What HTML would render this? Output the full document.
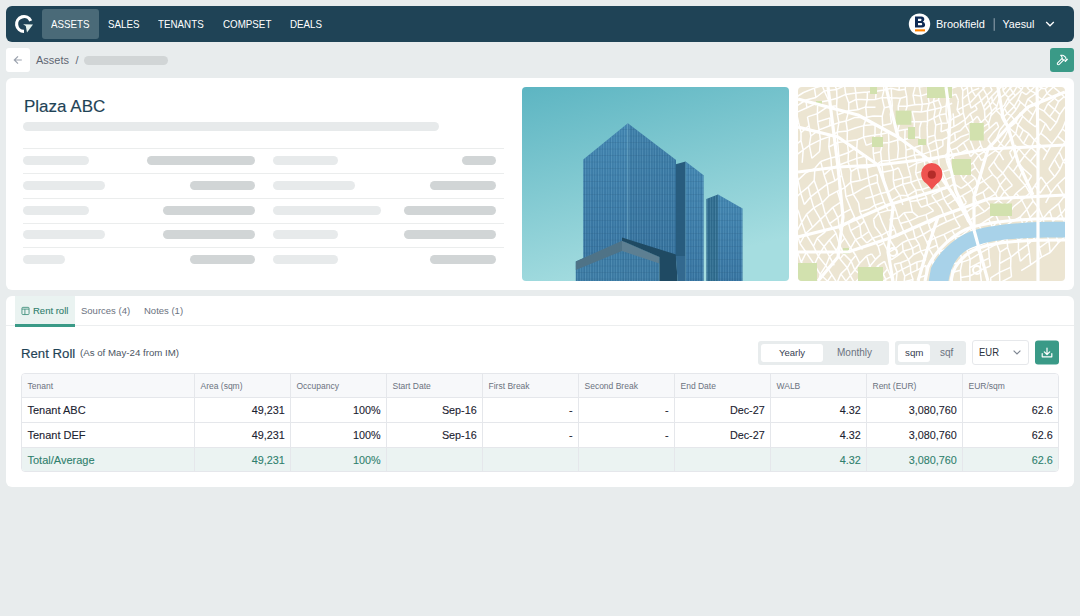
<!DOCTYPE html><html><head><meta charset="utf-8"><style>
*{box-sizing:border-box;margin:0;padding:0}
html,body{width:1080px;height:616px;overflow:hidden;background:#e8eced;font-family:"Liberation Sans",sans-serif;color:#1b2430}
.a{position:absolute;white-space:nowrap}
.navi{position:absolute;top:9.5px;height:30px;line-height:30px;font-size:10.3px;transform:scaleX(0.95);transform-origin:0 0;color:#fff}
.pill{position:absolute;height:9px;border-radius:4.5px;background:#e7eaeb}
.pill.d{background:#d1d5d6}
.card{position:absolute;background:#fff;border-radius:6px}
.hr{position:absolute;height:1px;background:#ebeded}
.th{position:absolute;font-size:8.5px;color:#6b7280}
.td{position:absolute;font-size:10.8px;color:#1b2230;-webkit-text-stroke:0.1px #1b2230}
.tg{position:absolute;font-size:10.8px;color:#2f7f6d;-webkit-text-stroke:0.1px #2f7f6d}
</style></head><body>
<div class="a" style="left:6px;top:6px;width:1068px;height:36px;background:#1f4356;border-radius:6px"></div>
<div class="a" style="left:42px;top:9px;width:57px;height:30px;background:#4a6a78;border-radius:3px"></div>
<div class="navi" style="left:51px">ASSETS</div>
<div class="navi" style="left:108px">SALES</div>
<div class="navi" style="left:158px">TENANTS</div>
<div class="navi" style="left:223px">COMPSET</div>
<div class="navi" style="left:290px">DEALS</div>
<svg class="a" style="left:0;top:0" width="1080" height="100" viewBox="0 0 1080 100"><path d="M30.73,20.93 A7.4,7.4 0 1 0 24,31.4" fill="none" stroke="#fff" stroke-width="3.2"/><path d="M23.1,24.2 L33,24.4 L27,32.6 L25.8,26 Z" fill="#e6f3ef"/><circle cx="919.5" cy="24.1" r="10.7" fill="#fff"/><path fill="#0f2b55" fill-rule="evenodd" d="M915,16.4 H921.3 Q924.3,16.4 924.3,19.3 Q924.3,21.1 922.8,21.8 Q925.1,22.5 925.1,24.8 Q925.1,27.5 922,27.5 H915 Z M918,18.8 H920.8 Q921.5,18.8 921.5,19.8 Q921.5,20.9 920.8,20.9 H918 Z M918,23.1 H921.3 Q922.2,23.1 922.2,24.2 Q922.2,25.3 921.3,25.3 H918 Z"/><rect x="915" y="29.3" width="10" height="2.1" fill="#ff8200"/><rect x="993.6" y="18.2" width="1.3" height="12.6" fill="#7a909d"/><path d="M1046.2,22 L1050,25.8 L1053.8,22" fill="none" stroke="#fff" stroke-width="1.3"/><rect x="6" y="48" width="24" height="24" rx="3" fill="#fff"/><path d="M18,56.3 L14.3,60 L18,63.7 M14.3,60 H21.8" fill="none" stroke="#9ba2ae" stroke-width="1.2"/><rect x="1050" y="48" width="24" height="24" rx="3" fill="#3a9a87"/><g transform="translate(1055.8,53.6) scale(0.53)" fill="none" stroke="#fff" stroke-width="2" stroke-linecap="round" stroke-linejoin="round"><path d="m15 12-8.5 8.5c-.83.83-2.17.83-3 0a2.12 2.12 0 0 1 0-3L12 9"/><path d="M17.64 15 22 10.64"/><path d="m20.91 11.7-1.25-1.25c-.6-.6-.93-1.4-.93-2.25v-.86L16.01 4.6a5.56 5.56 0 0 0-3.94-1.64H9l.92.82A6.180 6.18 0 0 1 12 8.4v1.560l2 2h2.47l2.26 1.91"/></g></svg>
<div class="a" style="left:936px;top:18px;font-size:11px;color:#fff">Brookfield</div>
<div class="a" style="left:1002.5px;top:18px;font-size:10.7px;color:#fff">Yaesul</div>
<div class="a" style="left:36px;top:54px;font-size:11px;color:#5f6672">Assets</div>
<div class="a" style="left:75.5px;top:54px;font-size:11px;color:#5f6672">/</div>
<div class="pill d" style="left:84px;top:56px;width:84px"></div>
<div class="card" style="left:6px;top:78px;width:1068px;height:212px"></div>
<div class="a" style="left:24px;top:97px;font-size:17px;color:#1f4356;-webkit-text-stroke:0.15px #1f4356">Plaza ABC</div>
<div class="pill" style="left:23px;top:122px;width:416px"></div>
<div class="hr" style="left:23px;top:148px;width:481px"></div>
<div class="hr" style="left:23px;top:173px;width:481px"></div>
<div class="hr" style="left:23px;top:198px;width:481px"></div>
<div class="hr" style="left:23px;top:223px;width:481px"></div>
<div class="hr" style="left:23px;top:247px;width:481px"></div>
<div class="pill" style="left:23px;top:156px;width:65.6px"></div>
<div class="pill d" style="left:147px;top:156px;width:108px"></div>
<div class="pill" style="left:273px;top:156px;width:65px"></div>
<div class="pill d" style="left:462px;top:156px;width:34px"></div>
<div class="pill" style="left:23px;top:181px;width:82px"></div>
<div class="pill d" style="left:190px;top:181px;width:65px"></div>
<div class="pill" style="left:273px;top:181px;width:82px"></div>
<div class="pill d" style="left:430px;top:181px;width:66px"></div>
<div class="pill" style="left:23px;top:205.5px;width:65.6px"></div>
<div class="pill d" style="left:163px;top:205.5px;width:92px"></div>
<div class="pill" style="left:273px;top:205.5px;width:108px"></div>
<div class="pill d" style="left:403.5px;top:205.5px;width:92.5px"></div>
<div class="pill" style="left:23px;top:230px;width:82px"></div>
<div class="pill d" style="left:163px;top:230px;width:92px"></div>
<div class="pill" style="left:273px;top:230px;width:65px"></div>
<div class="pill d" style="left:403.5px;top:230px;width:92.5px"></div>
<div class="pill" style="left:23px;top:255px;width:41.5px"></div>
<div class="pill d" style="left:190px;top:255px;width:65px"></div>
<div class="pill" style="left:273px;top:255px;width:65px"></div>
<div class="pill d" style="left:430px;top:255px;width:66px"></div>
<svg class="a" style="left:522px;top:87px" width="267" height="194" viewBox="522 87 267 194"><defs><clipPath id="pc"><rect x="522" y="87" width="267" height="194" rx="4"/></clipPath><linearGradient id="sky" x1="0" y1="0" x2="0.35" y2="1"><stop offset="0" stop-color="#5db5c2"/><stop offset="1" stop-color="#a5dde0"/></linearGradient><linearGradient id="bd" x1="0" y1="0" x2="0" y2="1"><stop offset="0" stop-color="#4286b2"/><stop offset="1" stop-color="#3572a0"/></linearGradient><pattern id="vl" width="2.6" height="6.5" patternUnits="userSpaceOnUse"><rect x="0" width="0.9" height="6.5" fill="#7fb8d6" opacity="0.3"/><rect x="1.6" width="0.6" height="6.5" fill="#24577a" opacity="0.25"/><rect y="5.9" width="2.6" height="0.6" fill="#24577a" opacity="0.3"/></pattern></defs><g clip-path="url(#pc)"><rect x="522" y="87" width="267" height="194" fill="url(#sky)"/><polygon points="583.3,159.4 627.8,123.3 627.8,240 583.3,259" fill="url(#bd)" /><polygon points="583.3,159.4 627.8,123.3 627.8,240 583.3,259" fill="url(#vl)" /><polygon points="627.8,123.3 676,160 676,256 627.8,240" fill="url(#bd)" /><polygon points="627.8,123.3 676,160 676,256 627.8,240" fill="#2f6890" opacity="0.25"/><polygon points="627.8,123.3 676,160 676,256 627.8,240" fill="url(#vl)" /><line x1="627.8" y1="123.3" x2="627.8" y2="240" stroke="#8cc0da" stroke-width="0.7" opacity="0.6"/><polygon points="575.8,261.5 622,240.7 622,281 575.8,281" fill="#3b7aa4" /><polygon points="575.8,261.5 622,240.7 622,281 575.8,281" fill="url(#vl)" /><polygon points="622,240.7 659.4,257 659.4,281 622,281" fill="#3a78a2" /><polygon points="622,240.7 659.4,257 659.4,281 622,281" fill="url(#vl)" /><polygon points="575.8,261.5 622,240.7 622,251 575.8,270" fill="#4f7387" /><polygon points="622,240.7 659.4,257 659.4,263.5 622,251" fill="#5d7f92" /><polygon points="622,237.5 676,254.5 677.6,281 659.4,281 659.4,257 622,240.7" fill="#1f4a63" /><polygon points="675.8,164.2 685.6,161.4 685.6,256 675.8,256" fill="#285c7e" /><polygon points="685.6,161.4 703.6,175.3 703.6,281 685.6,281" fill="url(#bd)" /><polygon points="685.6,161.4 703.6,175.3 703.6,281 685.6,281" fill="url(#vl)" /><polygon points="675.8,256 685.6,256 685.6,281 677.6,281" fill="#33698f" /><polygon points="706.4,198.9 718,194.5 718,281 706.4,281" fill="#2d6a8c" /><polygon points="706.4,198.9 718,194.5 718,281 706.4,281" fill="url(#vl)" /><polygon points="718,194.5 742.5,208.6 742.5,281 718,281" fill="url(#bd)" /><polygon points="718,194.5 742.5,208.6 742.5,281 718,281" fill="url(#vl)" /></g></svg>
<svg class="a" style="left:798px;top:87px" width="267" height="194" viewBox="0 0 267 194"><defs><clipPath id="mc"><rect width="267" height="194" rx="4"/></clipPath></defs><g clip-path="url(#mc)"><rect width="267" height="194" fill="#ece5d2"/><path d="M-45.3,41.1L-34.6,31.0M-45.3,41.1L-41.6,47.9M-41.6,47.9L-32.3,40.0M-41.6,47.9L-38.9,55.1M-38.9,55.1L-32.1,47.1M-38.9,55.1L-38.7,61.9M-38.7,61.9L-33.3,71.7M-33.3,71.7L-27.7,62.3M-33.3,71.7L-30.9,80.1M-30.9,80.1L-29.6,91.4M-29.6,91.4L-26.2,103.9M-26.2,103.9L-17.5,97.4M-26.2,103.9L-24.3,114.6M-24.3,114.6L-16.2,107.3M-24.3,114.6L-19.2,128.9M-19.2,128.9L-11.8,120.6M-12.7,138.6L-7.1,150.5M-7.1,150.5L-1.4,144.7M-7.1,150.5L-1.5,161.9M-1.5,161.9L3.2,175.3M3.2,175.3L8.2,165.5M3.2,175.3L10.8,183.5M10.8,183.5L16.4,177.6M20.4,195.2L22.2,187.3M20.4,195.2L25.2,204.3M25.2,204.3L29.6,194.2M32.8,211.5L35.3,202.0M38.1,219.7L40.7,209.4M38.1,219.7L45.4,226.5M45.4,226.5L48.1,218.9M45.4,226.5L51.0,230.6M51.0,230.6L51.3,222.3M51.0,230.6L53.5,235.9M53.5,235.9L57.9,229.7M53.5,235.9L56.1,241.0M56.1,241.0L59.2,234.4M56.1,241.0L58.9,247.8M58.9,247.8L62.1,241.5M58.9,247.8L59.3,253.0M59.3,253.0L63.0,245.3M59.3,253.0L60.8,256.6M60.8,256.6L62.2,251.9M62.1,261.8L59.4,266.5M59.4,266.5L63.3,259.1M59.2,269.8L61.4,266.6M-32.3,40.0L-24.7,31.5M-32.3,40.0L-32.1,47.1M-32.1,47.1L-22.2,40.2M-32.1,47.1L-28.7,54.8M-28.7,54.8L-19.7,47.3M-27.7,62.3L-15.6,57.8M-24.9,75.3L-13.8,66.6M-24.9,75.3L-22.5,85.4M-22.5,85.4L-13.4,78.2M-22.5,85.4L-17.5,97.4M-17.5,97.4L-16.2,107.3M-16.2,107.3L-8.6,99.2M-11.8,120.6L-5.3,113.7M-11.8,120.6L-8.7,132.5M-8.7,132.5L-1.4,144.7M-1.4,144.7L3.7,135.3M-1.4,144.7L1.9,156.4M1.9,156.4L7.6,146.5M1.9,156.4L8.2,165.5M8.2,165.5L16.4,177.6M16.4,177.6L20.3,169.3M16.4,177.6L22.2,187.3M22.2,187.3L27.9,178.7M22.2,187.3L29.6,194.2M29.6,194.2L33.9,187.9M29.6,194.2L35.3,202.0M35.3,202.0L39.0,195.9M35.3,202.0L40.7,209.4M40.7,209.4L48.1,218.9M48.1,218.9L51.5,210.5M48.1,218.9L51.3,222.3M51.3,222.3L54.6,217.8M57.9,229.7L59.2,234.4M59.2,234.4L60.6,228.4M62.1,241.5L63.0,245.3M63.0,245.3L65.5,240.0M63.0,245.3L62.2,251.9M62.2,251.9L66.5,245.1M62.2,251.9L61.8,255.4M61.8,255.4L65.2,249.7M61.8,255.4L63.3,259.1M63.3,259.1L65.4,255.4M63.3,259.1L61.4,266.6M61.4,266.6L62.6,260.5M-24.7,31.5L-11.9,26.5M-24.7,31.5L-22.2,40.2M-22.2,40.2L-11.2,32.7M-22.2,40.2L-19.7,47.3M-19.7,47.3L-15.6,57.8M-15.6,57.8L-6.5,50.1M-15.6,57.8L-13.8,66.6M-13.8,66.6L-5.8,60.8M-13.8,66.6L-13.4,78.2M-13.4,78.2L-4.1,69.7M-13.4,78.2L-11.1,88.0M-11.1,88.0L-2.0,82.1M-8.6,99.2L-0.0,93.1M-8.6,99.2L-5.3,113.7M-5.3,113.7L2.7,106.0M-5.3,113.7L0.5,124.5M0.5,124.5L3.7,135.3M3.7,135.3L8.5,127.4M3.7,135.3L7.6,146.5M7.6,146.5L14.6,140.2M7.6,146.5L15.5,159.3M15.5,159.3L19.1,151.2M15.5,159.3L20.3,169.3M20.3,169.3L26.1,159.4M20.3,169.3L27.9,178.7M27.9,178.7L31.5,169.7M27.9,178.7L33.9,187.9M33.9,187.9L39.0,195.9M39.0,195.9L42.8,186.9M39.0,195.9L44.6,202.8M44.6,202.8L48.0,194.1M44.6,202.8L51.5,210.5M51.5,210.5L53.9,202.3M51.5,210.5L54.6,217.8M54.6,217.8L58.8,209.7M59.6,222.7L61.4,216.9M59.6,222.7L60.6,228.4M60.6,228.4L63.5,221.3M63.5,234.3L66.5,226.9M63.5,234.3L65.5,240.0M65.5,240.0L67.2,233.8M65.5,240.0L66.5,245.1M66.5,245.1L68.4,236.6M65.2,249.7L68.8,242.1M62.6,260.5L66.0,255.4M-14.9,19.0L-4.7,12.0M-14.9,19.0L-11.9,26.5M-11.9,26.5L-2.2,19.5M-11.2,32.7L-1.7,25.5M-10.6,42.0L0.5,35.2M-10.6,42.0L-6.5,50.1M-6.5,50.1L-5.8,60.8M-5.8,60.8L3.0,53.6M-4.1,69.7L5.2,63.0M-4.1,69.7L-2.0,82.1M-2.0,82.1L-0.0,93.1M-0.0,93.1L7.8,85.8M-0.0,93.1L2.7,106.0M2.7,106.0L10.3,99.8M2.7,106.0L6.3,117.5M6.3,117.5L12.6,109.9M8.5,127.4L15.8,120.9M8.5,127.4L14.6,140.2M14.6,140.2L22.5,132.4M19.1,151.2L27.3,144.9M19.1,151.2L26.1,159.4M26.1,159.4L31.4,153.0M26.1,159.4L31.5,169.7M31.5,169.7L38.2,163.5M31.5,169.7L36.2,178.4M42.8,186.9L49.3,180.8M42.8,186.9L48.0,194.1M48.0,194.1L52.3,188.6M48.0,194.1L53.9,202.3M53.9,202.3L56.6,196.3M53.9,202.3L58.8,209.7M58.8,209.7L61.9,202.0M61.4,216.9L66.6,210.2M63.5,221.3L66.5,226.9M66.5,226.9L69.8,222.5M66.5,226.9L67.2,233.8M67.2,233.8L72.5,226.0M67.2,233.8L68.4,236.6M68.4,236.6L71.2,231.2M68.4,236.6L68.8,242.1M68.8,242.1L73.1,237.2M68.8,242.1L67.5,248.1M67.5,248.1L70.8,243.2M67.5,248.1L66.0,255.4M66.0,255.4L69.2,249.1M-4.7,12.0L5.5,5.5M-4.7,12.0L-2.2,19.5M-2.2,19.5L7.9,13.0M-2.2,19.5L-1.7,25.5M-1.7,25.5L8.9,20.8M-1.7,25.5L0.5,35.2M0.5,35.2L3.0,45.7M3.0,45.7L11.0,38.5M3.0,45.7L3.0,53.6M3.0,53.6L5.2,63.0M5.2,63.0L11.4,58.3M5.2,63.0L4.2,75.8M7.8,85.8L16.9,81.3M10.3,99.8L16.2,93.4M10.3,99.8L12.6,109.9M12.6,109.9L20.1,104.2M12.6,109.9L15.8,120.9M15.8,120.9L24.3,115.7M15.8,120.9L22.5,132.4M22.5,132.4L27.5,127.7M22.5,132.4L27.3,144.9M31.4,153.0L38.0,146.2M31.4,153.0L38.2,163.5M38.2,163.5L41.4,157.9M38.2,163.5L42.0,171.9M42.0,171.9L45.9,166.9M42.0,171.9L49.3,180.8M49.3,180.8L53.1,174.1M49.3,180.8L52.3,188.6M52.3,188.6L56.8,183.0M52.3,188.6L56.6,196.3M56.6,196.3L63.4,188.4M56.6,196.3L61.9,202.0M61.9,202.0L66.1,196.6M61.9,202.0L66.6,210.2M66.6,210.2L69.6,202.4M66.9,215.3L71.2,209.5M69.8,222.5L75.2,213.9M69.8,222.5L72.5,226.0M72.5,226.0L74.4,222.2M72.5,226.0L71.2,231.2M71.2,231.2L76.5,227.5M71.2,231.2L73.1,237.2M73.1,237.2L73.5,233.4M73.1,237.2L70.8,243.2M70.8,243.2L75.4,239.9M69.2,249.1L72.8,242.5M5.5,5.5L16.4,1.1M7.9,13.0L17.9,10.5M7.9,13.0L8.9,20.8M8.9,20.8L19.7,15.6M9.5,29.9L19.4,26.6M9.5,29.9L11.0,38.5M11.0,38.5L12.8,49.0M12.8,49.0L21.1,42.9M12.8,49.0L11.4,58.3M11.4,58.3L22.4,52.8M11.4,58.3L13.9,71.3M13.9,71.3L21.6,64.5M16.9,81.3L22.7,74.5M16.9,81.3L16.2,93.4M16.2,93.4L20.1,104.2M20.1,104.2L29.2,97.2M20.1,104.2L24.3,115.7M24.3,115.7L30.7,108.9M24.3,115.7L27.5,127.7M27.5,127.7L34.8,120.4M27.5,127.7L31.6,136.7M31.6,136.7L39.9,130.6M31.6,136.7L38.0,146.2M38.0,146.2L41.4,157.9M41.4,157.9L46.7,151.1M41.4,157.9L45.9,166.9M45.9,166.9L52.7,161.0M45.9,166.9L53.1,174.1M53.1,174.1L57.8,168.5M53.1,174.1L56.8,183.0M56.8,183.0L61.6,176.2M56.8,183.0L63.4,188.4M63.4,188.4L66.0,184.3M63.4,188.4L66.1,196.6M66.1,196.6L70.7,189.4M66.1,196.6L69.6,202.4M69.6,202.4L73.1,196.9M69.6,202.4L71.2,209.5M71.2,209.5L77.3,202.7M71.2,209.5L75.2,213.9M75.2,213.9L79.0,210.4M75.2,213.9L74.4,222.2M74.4,222.2L78.0,216.5M73.5,233.4L75.4,239.9M75.4,239.9L79.0,233.7M75.4,239.9L72.8,242.5M72.8,242.5L75.5,240.6M16.4,1.1L24.3,-1.3M16.4,1.1L17.9,10.5M17.9,10.5L26.3,4.0M19.7,15.6L30.6,13.5M19.7,15.6L19.4,26.6M19.4,26.6L29.1,20.1M19.4,26.6L19.7,34.7M19.7,34.7L32.0,30.9M19.7,34.7L21.1,42.9M21.1,42.9L31.8,38.8M21.1,42.9L22.4,52.8M22.4,52.8L31.5,49.6M22.4,52.8L21.6,64.5M22.7,74.5L32.9,70.9M22.7,74.5L26.0,87.9M26.0,87.9L33.6,81.2M26.0,87.9L29.2,97.2M29.2,97.2L36.9,93.9M29.2,97.2L30.7,108.9M30.7,108.9L39.4,104.2M34.8,120.4L42.7,115.2M34.8,120.4L39.9,130.6M39.9,130.6L45.6,125.8M39.9,130.6L41.5,141.8M41.5,141.8L50.2,135.2M41.5,141.8L46.7,151.1M46.7,151.1L52.7,161.0M52.7,161.0L57.6,152.6M52.7,161.0L57.8,168.5M57.8,168.5L61.6,176.2M61.6,176.2L68.6,168.9M66.0,184.3L71.8,179.2M66.0,184.3L70.7,189.4M70.7,189.4L76.0,184.9M70.7,189.4L73.1,196.9M73.1,196.9L78.7,190.7M77.3,202.7L80.1,197.5M77.3,202.7L79.0,210.4M79.0,210.4L82.6,204.6M79.0,210.4L78.0,216.5M78.0,216.5L85.1,210.1M78.0,216.5L78.3,220.8M78.3,220.8L83.3,216.7M78.3,220.8L79.3,227.1M79.3,227.1L82.4,222.9M79.0,233.7L81.4,229.6M79.0,233.7L75.5,240.6M75.5,240.6L78.9,237.1M24.3,-1.3L35.7,-4.0M24.3,-1.3L26.3,4.0M26.3,4.0L38.6,2.4M26.3,4.0L30.6,13.5M30.6,13.5L39.0,11.2M29.1,20.1L38.6,18.7M32.0,30.9L31.8,38.8M31.8,38.8L40.9,35.6M31.5,49.6L39.3,45.1M31.5,49.6L30.8,60.0M30.8,60.0L39.7,55.5M30.8,60.0L32.9,70.9M32.9,70.9L40.9,69.0M32.9,70.9L33.6,81.2M33.6,81.2L41.8,77.7M33.6,81.2L36.9,93.9M36.9,93.9L43.8,88.4M39.4,104.2L46.9,100.6M39.4,104.2L42.7,115.2M42.7,115.2L45.6,125.8M45.6,125.8L52.9,122.1M50.2,135.2L56.6,130.4M50.2,135.2L52.6,143.6M52.6,143.6L61.9,138.4M52.6,143.6L57.6,152.6M57.6,152.6L63.3,149.8M57.6,152.6L64.5,162.5M68.6,168.9L73.6,166.9M68.6,168.9L71.8,179.2M71.8,179.2L77.5,172.4M71.8,179.2L76.0,184.9M76.0,184.9L79.7,178.8M76.0,184.9L78.7,190.7M78.7,190.7L85.3,187.1M78.7,190.7L80.1,197.5M80.1,197.5L87.8,192.4M82.6,204.6L87.3,199.0M82.6,204.6L85.1,210.1M85.1,210.1L83.3,216.7M83.3,216.7L88.3,213.0M83.3,216.7L82.4,222.9M81.4,229.6L85.6,227.4M81.4,229.6L78.9,237.1M78.9,237.1L84.2,232.2M35.7,-4.0L45.9,-8.0M35.7,-4.0L38.6,2.4M38.6,2.4L46.6,-1.3M38.6,2.4L39.0,11.2M39.0,11.2L47.7,7.4M39.0,11.2L38.6,18.7M38.6,18.7L39.4,27.7M39.4,27.7L50.7,23.7M39.4,27.7L40.9,35.6M40.9,35.6L48.0,34.1M40.9,35.6L39.3,45.1M39.3,45.1L49.4,43.9M39.3,45.1L39.7,55.5M39.7,55.5L49.1,54.2M39.7,55.5L40.9,69.0M40.9,69.0L50.5,65.5M40.9,69.0L41.8,77.7M41.8,77.7L50.0,74.6M41.8,77.7L43.8,88.4M43.8,88.4L46.9,100.6M46.9,100.6L52.7,95.3M46.9,100.6L47.9,109.6M47.9,109.6L55.2,107.2M47.9,109.6L52.9,122.1M52.9,122.1L56.6,130.4M56.6,130.4L61.9,138.4M61.9,138.4L66.3,134.1M61.9,138.4L63.3,149.8M63.3,149.8L71.0,144.5M63.3,149.8L68.9,155.9M68.9,155.9L74.7,151.3M73.6,166.9L77.5,172.4M77.5,172.4L82.5,167.6M79.7,178.8L86.5,174.3M79.7,178.8L85.3,187.1M85.3,187.1L89.5,182.1M85.3,187.1L87.8,192.4M87.8,192.4L92.9,189.7M87.8,192.4L87.3,199.0M87.3,199.0L94.9,196.8M87.3,199.0L88.6,205.5M88.6,205.5L95.3,203.2M88.6,205.5L88.3,213.0M88.3,213.0L94.3,210.5M87.8,218.2L85.6,227.4M85.6,227.4L93.2,223.2M85.6,227.4L84.2,232.2M84.2,232.2L89.8,230.1M45.9,-8.0L55.7,-11.3M45.9,-8.0L46.6,-1.3M46.6,-1.3L47.7,7.4M47.7,7.4L57.8,5.9M47.7,7.4L50.8,16.0M50.8,16.0L58.2,12.3M50.8,16.0L50.7,23.7M50.7,23.7L59.7,22.7M50.7,23.7L48.0,34.1M48.0,34.1L57.1,30.4M48.0,34.1L49.4,43.9M49.4,43.9L57.2,41.0M49.4,43.9L49.1,54.2M49.1,54.2L59.4,52.8M49.1,54.2L50.5,65.5M50.5,65.5L58.8,60.7M50.5,65.5L50.0,74.6M50.0,74.6L58.8,71.4M50.0,74.6L53.0,84.5M53.0,84.5L59.6,80.7M53.0,84.5L52.7,95.3M52.7,95.3L62.2,93.6M52.7,95.3L55.2,107.2M55.2,107.2L64.9,101.4M55.2,107.2L60.6,115.8M60.6,115.8L62.0,124.8M62.0,124.8L71.1,122.0M62.0,124.8L66.3,134.1M66.3,134.1L71.0,144.5M71.0,144.5L74.7,151.3M74.7,151.3L83.4,148.3M74.7,151.3L80.2,159.2M80.2,159.2L85.8,156.2M80.2,159.2L82.5,167.6M86.5,174.3L89.5,182.1M89.5,182.1L92.9,189.7M92.9,189.7L99.1,185.3M92.9,189.7L94.9,196.8M94.9,196.8L95.3,203.2M95.3,203.2L99.0,199.6M94.3,210.5L100.4,207.4M94.3,210.5L94.4,217.5M94.4,217.5L93.2,223.2M93.2,223.2L97.7,218.7M89.8,230.1L96.7,225.9M55.7,-11.3L66.3,-12.5M55.7,-11.3L56.3,-3.7M56.3,-3.7L66.6,-4.9M56.3,-3.7L57.8,5.9M57.8,5.9L69.4,5.0M57.8,5.9L58.2,12.3M58.2,12.3L69.2,12.7M58.2,12.3L59.7,22.7M59.7,22.7L67.7,19.9M57.1,30.4L68.7,30.2M57.2,41.0L65.7,38.6M59.4,52.8L65.6,50.1M59.4,52.8L58.8,60.7M58.8,60.7L58.8,71.4M58.8,71.4L68.3,68.8M58.8,71.4L59.6,80.7M59.6,80.7L68.9,80.7M59.6,80.7L62.2,93.6M62.2,93.6L70.3,90.6M64.9,101.4L71.6,98.0M67.2,111.5L74.7,109.5M71.1,122.0L76.8,118.2M75.5,132.3L80.8,126.1M75.5,132.3L76.8,139.5M76.8,139.5L83.4,148.3M83.4,148.3L88.9,145.2M83.4,148.3L85.8,156.2M85.8,156.2L90.6,165.4M90.6,165.4L97.4,161.5M90.6,165.4L93.2,172.9M93.2,172.9L100.3,168.1M96.2,177.3L102.6,175.8M96.2,177.3L99.1,185.3M99.1,185.3L104.2,182.3M99.1,185.3L98.2,194.0M98.2,194.0L99.0,199.6M99.0,199.6L106.2,194.7M99.0,199.6L100.4,207.4M100.4,207.4L105.6,202.6M100.4,207.4L99.5,212.0M99.5,212.0L106.5,210.9M97.7,218.7L105.5,216.4M97.7,218.7L96.7,225.9M96.7,225.9L104.3,223.3M66.3,-12.5L75.3,-14.1M66.3,-12.5L66.6,-4.9M66.6,-4.9L76.8,-4.5M69.4,5.0L78.2,4.2M69.4,5.0L69.2,12.7M69.2,12.7L77.6,12.4M69.2,12.7L67.7,19.9M67.7,19.9L77.5,20.3M67.7,19.9L68.7,30.2M68.7,30.2L75.4,29.0M68.7,30.2L65.7,38.6M65.7,38.6L77.1,37.4M65.7,38.6L65.6,50.1M65.6,50.1L77.0,48.0M65.6,50.1L68.2,58.4M68.2,58.4L75.0,55.9M68.3,68.8L68.9,80.7M68.9,80.7L77.0,78.5M68.9,80.7L70.3,90.6M70.3,90.6L79.2,87.5M70.3,90.6L71.6,98.0M71.6,98.0L79.5,95.5M71.6,98.0L74.7,109.5M74.7,109.5L83.0,106.4M74.7,109.5L76.8,118.2M76.8,118.2L86.1,115.0M76.8,118.2L80.8,126.1M80.8,126.1L90.0,123.4M80.8,126.1L84.5,135.9M84.5,135.9L88.9,145.2M88.9,145.2L96.6,142.3M88.9,145.2L92.5,154.0M92.5,154.0L97.4,161.5M97.4,161.5L104.3,155.7M97.4,161.5L100.3,168.1M100.3,168.1L105.2,164.2M102.6,175.8L110.4,172.6M102.6,175.8L104.2,182.3M104.2,182.3L112.3,178.3M104.2,182.3L106.7,189.1M106.7,189.1L112.8,185.9M106.7,189.1L106.2,194.7M106.2,194.7L115.1,192.4M105.6,202.6L113.2,200.6M105.6,202.6L106.5,210.9M105.5,216.4L110.3,213.4M105.5,216.4L104.3,223.3M104.3,223.3L110.0,222.2M75.3,-14.1L76.8,-4.5M76.8,-4.5L84.9,-5.3M78.2,4.2L86.0,3.0M78.2,4.2L77.6,12.4M77.6,12.4L84.1,10.6M75.4,29.0L84.2,29.3M77.1,37.4L77.0,48.0M77.0,48.0L82.9,47.2M77.0,48.0L75.0,55.9M75.0,55.9L84.7,56.0M75.0,55.9L75.3,66.4M75.3,66.4L82.6,64.7M75.3,66.4L77.0,78.5M77.0,78.5L83.5,74.0M79.2,87.5L79.5,95.5M79.5,95.5L83.0,106.4M83.0,106.4L90.9,104.6M83.0,106.4L86.1,115.0M86.1,115.0L90.0,123.4M90.0,123.4L97.7,122.7M91.8,132.1L100.3,131.1M91.8,132.1L96.6,142.3M96.6,142.3L98.8,149.3M98.8,149.3L105.8,144.6M104.3,155.7L110.3,153.0M104.3,155.7L105.2,164.2M105.2,164.2L114.5,161.4M105.2,164.2L110.4,172.6M110.4,172.6L115.3,167.7M110.4,172.6L112.3,178.3M112.3,178.3L118.9,175.0M112.3,178.3L112.8,185.9M112.8,185.9L119.1,183.1M112.8,185.9L115.1,192.4M115.1,192.4L113.2,200.6M113.2,200.6L121.2,199.1M113.2,200.6L114.7,206.4M114.7,206.4L110.3,213.4M110.3,213.4L120.1,213.2M110.3,213.4L110.0,222.2M110.0,222.2L116.7,218.7M82.2,-14.5L91.3,-14.5M82.2,-14.5L84.9,-5.3M84.9,-5.3L93.6,-4.8M84.9,-5.3L86.0,3.0M86.0,3.0L93.2,1.2M86.0,3.0L84.1,10.6M84.1,10.6L93.7,10.8M84.1,10.6L86.3,20.7M86.3,20.7L94.4,19.0M86.3,20.7L84.2,29.3M84.2,29.3L84.7,38.6M84.7,38.6L93.5,36.5M84.7,38.6L82.9,47.2M82.9,47.2L90.5,45.4M82.9,47.2L84.7,56.0M84.7,56.0L90.9,55.4M84.7,56.0L82.6,64.7M82.6,64.7L83.5,74.0M83.5,74.0L91.3,73.5M83.5,74.0L84.8,85.3M84.8,85.3L95.4,83.1M84.8,85.3L86.5,95.2M90.9,104.6L96.7,100.6M94.0,113.2L101.8,108.3M94.0,113.2L97.7,122.7M97.7,122.7L100.3,131.1M100.3,131.1L106.0,125.8M100.3,131.1L102.3,136.4M102.3,136.4L111.0,134.1M102.3,136.4L105.8,144.6M105.8,144.6L114.8,140.9M105.8,144.6L110.3,153.0M110.3,153.0L117.3,151.4M110.3,153.0L114.5,161.4M114.5,161.4L121.2,157.3M114.5,161.4L115.3,167.7M115.3,167.7L122.8,164.1M118.9,175.0L127.8,172.9M118.9,175.0L119.1,183.1M119.1,183.1L128.0,178.4M120.7,190.7L128.5,188.3M120.7,190.7L121.2,199.1M121.2,199.1L128.8,195.3M121.2,199.1L122.0,203.7M122.0,203.7L129.7,203.1M122.0,203.7L120.1,213.2M120.1,213.2L116.7,218.7M116.7,218.7L123.8,219.0M91.3,-14.5L98.8,-13.2M91.3,-14.5L93.6,-4.8M93.2,1.2L101.0,3.2M93.2,1.2L93.7,10.8M93.7,10.8L102.4,11.2M93.7,10.8L94.4,19.0M94.4,19.0L92.3,27.0M92.3,27.0L93.5,36.5M90.5,45.4L90.9,55.4M90.9,55.4L99.6,53.1M90.9,55.4L90.6,63.5M90.6,63.5L91.3,73.5M91.3,73.5L99.5,71.9M91.3,73.5L95.4,83.1M95.4,83.1L100.4,80.7M95.4,83.1L95.3,93.5M95.3,93.5L104.8,91.2M95.3,93.5L96.7,100.6M96.7,100.6L104.8,97.2M96.7,100.6L101.8,108.3M101.8,108.3L109.6,108.7M101.8,108.3L104.9,117.9M106.0,125.8L114.4,124.9M106.0,125.8L111.0,134.1M111.0,134.1L120.2,129.9M111.0,134.1L114.8,140.9M114.8,140.9L121.5,138.9M114.8,140.9L117.3,151.4M117.3,151.4L125.2,147.5M117.3,151.4L121.2,157.3M121.2,157.3L122.8,164.1M122.8,164.1L130.9,161.7M122.8,164.1L127.8,172.9M128.0,178.4L128.5,188.3M128.8,195.3L136.8,192.3M128.8,195.3L129.7,203.1M129.7,203.1L137.0,201.8M127.6,208.9L134.7,208.5M123.8,219.0L133.1,216.4M98.8,-13.2L107.1,-15.9M98.8,-13.2L101.6,-5.1M101.6,-5.1L107.9,-6.1M101.6,-5.1L101.0,3.2M101.0,3.2L107.2,2.2M102.4,11.2L108.7,9.6M102.4,11.2L100.2,19.3M100.2,19.3L109.2,19.0M100.2,19.3L100.6,28.5M101.9,34.9L99.6,44.0M99.6,44.0L107.1,42.4M99.6,44.0L99.6,53.1M99.6,53.1L106.8,52.6M99.6,53.1L100.4,61.7M100.4,61.7L99.5,71.9M99.5,71.9L107.9,70.6M100.4,80.7L104.8,91.2M104.8,91.2L112.8,89.5M104.8,91.2L104.8,97.2M104.8,97.2L113.0,95.3M104.8,97.2L109.6,108.7M109.6,108.7L117.8,103.3M109.6,108.7L112.1,114.4M112.1,114.4L119.4,113.5M112.1,114.4L114.4,124.9M114.4,124.9L120.2,129.9M120.2,129.9L128.0,127.6M121.5,138.9L125.2,147.5M125.2,147.5L132.7,142.9M125.2,147.5L128.8,155.0M128.8,155.0L137.1,151.0M128.8,155.0L130.9,161.7M130.9,161.7L139.1,158.2M130.9,161.7L135.8,169.8M135.8,169.8L141.0,164.7M135.8,169.8L134.6,175.6M134.6,175.6L143.7,172.6M134.6,175.6L137.4,184.2M137.4,184.2L146.8,180.9M137.4,184.2L136.8,192.3M136.8,192.3L145.0,190.6M136.8,192.3L137.0,201.8M134.7,208.5L145.4,206.5M134.7,208.5L133.1,216.4M107.1,-15.9L112.4,-15.8M107.1,-15.9L107.9,-6.1M107.9,-6.1L116.1,-7.3M107.9,-6.1L107.2,2.2M107.2,2.2L108.7,9.6M108.7,9.6L109.2,19.0M109.2,19.0L116.8,17.8M109.2,19.0L107.0,26.6M107.0,26.6L114.2,24.6M106.5,34.8L116.4,34.5M107.1,42.4L116.2,41.6M107.1,42.4L106.8,52.6M106.8,52.6L115.3,50.5M106.8,52.6L108.1,63.0M108.1,63.0L116.0,60.7M108.1,63.0L107.9,70.6M107.9,70.6L116.4,68.0M107.9,70.6L110.2,80.7M110.2,80.7L118.7,76.2M110.2,80.7L112.8,89.5M112.8,89.5L113.0,95.3M113.0,95.3L120.1,92.6M113.0,95.3L117.8,103.3M117.8,103.3L124.0,102.5M117.8,103.3L119.4,113.5M119.4,113.5L128.6,110.5M119.4,113.5L123.1,120.2M123.1,120.2L129.5,118.0M128.0,127.6L135.6,123.8M128.0,127.6L130.5,136.9M130.5,136.9L139.0,131.7M130.5,136.9L132.7,142.9M132.7,142.9L141.2,138.3M132.7,142.9L137.1,151.0M137.1,151.0L146.0,147.4M137.1,151.0L139.1,158.2M139.1,158.2L141.0,164.7M141.0,164.7L149.6,161.7M141.0,164.7L143.7,172.6M143.7,172.6L151.9,171.9M143.7,172.6L146.8,180.9M146.8,180.9L145.0,190.6M145.0,190.6L146.2,197.1M146.2,197.1L145.4,206.5M145.4,206.5L142.4,214.7M142.4,214.7L150.9,212.2M112.4,-15.8L120.2,-15.7M112.4,-15.8L116.1,-7.3M117.1,0.0L115.0,7.9M115.0,7.9L122.9,8.9M115.0,7.9L116.8,17.8M116.8,17.8L124.3,17.2M114.2,24.6L123.3,25.1M114.2,24.6L116.4,34.5M116.4,34.5L123.4,34.8M116.4,34.5L116.2,41.6M115.3,50.5L121.6,50.0M116.0,60.7L123.9,58.1M116.0,60.7L116.4,68.0M116.4,68.0L123.9,67.6M116.4,68.0L118.7,76.2M118.7,76.2L126.3,74.1M118.7,76.2L117.6,86.4M117.6,86.4L127.5,82.9M117.6,86.4L120.1,92.6M120.1,92.6L127.8,91.8M120.1,92.6L124.0,102.5M124.0,102.5L133.0,99.4M124.0,102.5L128.6,110.5M128.6,110.5L129.5,118.0M129.5,118.0L138.3,114.6M129.5,118.0L135.6,123.8M141.2,138.3L148.6,134.8M146.0,147.4L154.1,143.3M146.0,147.4L149.5,154.8M149.5,154.8L157.7,149.8M149.6,161.7L158.6,157.9M151.9,171.9L162.8,167.8M151.9,171.9L153.0,177.2M153.0,177.2L164.1,175.1M153.0,177.2L154.1,185.4M154.1,185.4L162.4,183.3M154.1,185.4L154.2,195.5M154.2,195.5L154.0,202.6M154.0,202.6L163.3,200.2M150.9,212.2L160.6,209.8M120.2,-15.7L127.0,-14.9M120.2,-15.7L121.6,-6.2M121.6,-6.2L121.3,-0.1M121.3,-0.1L129.6,-1.3M121.3,-0.1L122.9,8.9M122.9,8.9L129.5,6.8M122.9,8.9L124.3,17.2M124.3,17.2L131.2,16.4M124.3,17.2L123.3,25.1M123.3,25.1L129.4,23.7M123.4,34.8L129.6,34.2M123.4,34.8L121.6,40.8M121.6,40.8L121.6,50.0M121.6,50.0L123.9,58.1M123.9,58.1L123.9,67.6M123.9,67.6L132.2,64.6M123.9,67.6L126.3,74.1M126.3,74.1L133.2,73.2M126.3,74.1L127.5,82.9M127.5,82.9L133.0,79.5M127.8,91.8L138.0,88.4M127.8,91.8L133.0,99.4M133.0,99.4L139.3,97.4M133.7,108.2L143.0,103.4M133.7,108.2L138.3,114.6M138.3,114.6L145.7,111.4M138.3,114.6L143.1,120.8M143.1,120.8L145.9,128.3M145.9,128.3L148.6,134.8M148.6,134.8L156.8,131.2M154.1,143.3L162.2,140.2M154.1,143.3L157.7,149.8M157.7,149.8L163.6,148.7M157.7,149.8L158.6,157.9M158.6,157.9L166.6,153.8M162.8,167.8L164.1,175.1M164.1,175.1L172.2,172.4M164.1,175.1L162.4,183.3M162.4,183.3L162.8,190.6M162.8,190.6L171.9,189.0M162.8,190.6L163.3,200.2M163.3,200.2L172.0,197.3M163.3,200.2L160.6,209.8M160.6,209.8L170.4,207.6M127.0,-14.9L130.1,-16.4M127.0,-14.9L127.5,-9.5M127.5,-9.5L132.9,-8.8M127.5,-9.5L129.6,-1.3M129.6,-1.3L135.2,-1.0M129.6,-1.3L129.5,6.8M129.5,6.8L136.8,8.5M129.5,6.8L131.2,16.4M131.2,16.4L135.3,14.7M131.2,16.4L129.4,23.7M129.4,23.7L137.3,22.1M129.4,23.7L129.6,34.2M129.6,34.2L135.8,31.0M129.6,34.2L129.1,39.9M129.1,39.9L129.5,50.3M129.5,50.3L136.9,48.1M129.5,50.3L129.6,57.6M129.6,57.6L137.7,53.5M129.6,57.6L132.2,64.6M132.2,64.6L139.4,62.3M132.2,64.6L133.2,73.2M133.2,73.2L140.6,71.0M133.0,79.5L141.2,79.1M133.0,79.5L138.0,88.4M138.0,88.4L144.6,84.9M138.0,88.4L139.3,97.4M139.3,97.4L143.0,103.4M143.0,103.4L151.0,100.0M143.0,103.4L145.7,111.4M145.7,111.4L155.0,105.6M145.7,111.4L149.4,117.7M149.4,117.7L157.9,112.0M149.4,117.7L154.9,125.3M154.9,125.3L162.9,121.5M154.9,125.3L156.8,131.2M156.8,131.2L167.0,126.3M156.8,131.2L162.2,140.2M163.6,148.7L172.0,141.6M163.6,148.7L166.6,153.8M166.6,153.8L168.8,162.8M168.8,162.8L178.1,159.6M168.8,162.8L172.2,172.4M172.2,172.4L181.4,166.7M172.2,172.4L171.8,180.6M171.8,180.6L182.7,175.0M171.8,180.6L171.9,189.0M171.9,189.0L182.1,183.3M171.9,189.0L172.0,197.3M172.0,197.3L183.3,194.4M172.0,197.3L170.4,207.6M132.9,-8.8L139.6,-10.8M135.2,-1.0L140.8,-1.5M135.2,-1.0L136.8,8.5M136.8,8.5L141.3,6.4M136.8,8.5L135.3,14.7M135.3,14.7L140.6,13.0M135.3,14.7L137.3,22.1M137.3,22.1L143.4,20.6M137.3,22.1L135.8,31.0M135.8,31.0L141.1,28.1M135.8,31.0L137.7,38.1M137.7,38.1L143.6,36.2M137.7,38.1L136.9,48.1M136.9,48.1L137.7,53.5M137.7,53.5L144.8,52.7M137.7,53.5L139.4,62.3M139.4,62.3L145.0,58.7M139.4,62.3L140.6,71.0M140.6,71.0L147.5,68.4M140.6,71.0L141.2,79.1M141.2,79.1L144.6,84.9M144.6,84.9L151.6,82.5M144.6,84.9L147.7,92.6M147.7,92.6L155.4,89.1M147.7,92.6L151.0,100.0M151.0,100.0L156.2,96.8M151.0,100.0L155.0,105.6M155.0,105.6L157.9,112.0M157.9,112.0L164.2,108.6M157.9,112.0L162.9,121.5M162.9,121.5L168.4,115.5M162.9,121.5L167.0,126.3M167.0,126.3L172.5,122.0M167.0,126.3L169.9,135.0M169.9,135.0L176.2,129.9M172.0,141.6L177.9,151.5M177.9,151.5L184.5,144.4M177.9,151.5L178.1,159.6M178.1,159.6L189.2,154.9M178.1,159.6L181.4,166.7M181.4,166.7L190.6,161.4M181.4,166.7L182.7,175.0M182.7,175.0L191.3,171.1M182.7,175.0L182.1,183.3M182.1,183.3L192.3,179.0M182.1,183.3L183.3,194.4M183.3,194.4L182.8,203.5M182.8,203.5L193.0,200.8M136.3,-19.2L142.1,-19.3M136.3,-19.2L139.6,-10.8M139.6,-10.8L145.2,-10.7M139.6,-10.8L140.8,-1.5M140.8,-1.5L141.3,6.4M141.3,6.4L147.6,4.6M141.3,6.4L140.6,13.0M140.6,13.0L143.4,20.6M143.4,20.6L148.1,18.9M143.4,20.6L141.1,28.1M141.1,28.1L148.1,26.8M141.1,28.1L143.6,36.2M143.6,36.2L149.6,36.0M143.6,36.2L143.0,44.9M143.0,44.9L148.6,42.7M144.8,52.7L151.5,49.5M144.8,52.7L145.0,58.7M147.5,68.4L152.9,63.1M147.5,68.4L149.0,75.9M149.0,75.9L154.9,69.6M149.0,75.9L151.6,82.5M151.6,82.5L157.1,77.7M151.6,82.5L155.4,89.1M155.4,89.1L160.1,82.9M155.4,89.1L156.2,96.8M156.2,96.8L163.1,101.4M163.1,101.4L169.9,97.0M164.2,108.6L174.3,102.8M164.2,108.6L168.4,115.5M172.5,122.0L180.1,117.9M176.2,129.9L186.5,124.6M180.9,138.3L190.6,132.0M180.9,138.3L184.5,144.4M184.5,144.4L194.6,140.3M184.5,144.4L189.2,154.9M189.2,154.9L196.5,147.2M189.2,154.9L190.6,161.4M190.6,161.4L198.8,156.8M190.6,161.4L191.3,171.1M191.3,171.1L192.3,179.0M192.7,190.8L201.5,185.4M192.7,190.8L193.0,200.8M142.1,-19.3L146.5,-23.4M142.1,-19.3L145.2,-10.7M145.2,-10.7L146.8,-4.2M146.8,-4.2L150.5,-4.8M146.8,-4.2L147.6,4.6M147.6,4.6L153.4,1.4M149.1,12.7L154.0,8.6M149.1,12.7L148.1,18.9M148.1,18.9L154.2,16.2M148.1,18.9L148.1,26.8M148.1,26.8L149.6,36.0M149.6,36.0L155.6,31.0M148.6,42.7L155.9,39.6M148.6,42.7L151.5,49.5M151.5,49.5L156.7,45.7M151.5,49.5L150.4,57.5M150.4,57.5L157.5,53.6M150.4,57.5L152.9,63.1M152.9,63.1L158.6,61.0M152.9,63.1L154.9,69.6M154.9,69.6L161.4,66.4M154.9,69.6L157.1,77.7M157.1,77.7L163.7,72.9M157.1,77.7L160.1,82.9M160.1,82.9L169.6,79.2M160.1,82.9L165.1,92.5M165.1,92.5L170.6,85.6M165.1,92.5L169.9,97.0M169.9,97.0L177.3,91.0M169.9,97.0L174.3,102.8M174.3,102.8L179.6,97.7M174.3,102.8L176.1,109.2M176.1,109.2L185.1,105.0M176.1,109.2L180.1,117.9M180.1,117.9L186.5,124.6M186.5,124.6L192.8,119.4M190.6,132.0L197.4,127.3M190.6,132.0L194.6,140.3M194.6,140.3L200.1,133.1M194.6,140.3L196.5,147.2M196.5,147.2L204.2,141.5M196.5,147.2L198.8,156.8M198.8,156.8L208.9,151.1M198.8,156.8L202.0,165.2M202.0,165.2L209.7,160.4M202.0,165.2L201.6,176.5M201.6,176.5L212.9,170.2M201.6,176.5L201.5,185.4M201.5,185.4L212.6,180.4M201.5,185.4L201.9,195.7M201.9,195.7L213.5,189.7M146.5,-23.4L150.4,-25.7M146.5,-23.4L149.7,-14.3M149.7,-14.3L153.5,-15.2M149.7,-14.3L150.5,-4.8M150.5,-4.8L155.3,-8.8M150.5,-4.8L153.4,1.4M153.4,1.4L157.9,-0.2M153.4,1.4L154.0,8.6M154.0,8.6L157.8,7.1M155.1,26.4L155.6,31.0M155.6,31.0L162.4,28.0M155.6,31.0L155.9,39.6M155.9,39.6L160.6,36.8M156.7,45.7L162.3,43.7M156.7,45.7L157.5,53.6M157.5,53.6L163.0,49.7M158.6,61.0L165.3,55.7M158.6,61.0L161.4,66.4M161.4,66.4L169.3,62.6M163.7,72.9L169.6,79.2M169.6,79.2L175.2,75.8M169.6,79.2L170.6,85.6M170.6,85.6L177.5,80.6M170.6,85.6L177.3,91.0M177.3,91.0L179.6,97.7M179.6,97.7L185.7,94.0M185.1,105.0L191.1,99.9M185.1,105.0L187.7,112.9M187.7,112.9L197.6,106.9M187.7,112.9L192.8,119.4M192.8,119.4L200.4,113.5M197.4,127.3L206.8,118.5M197.4,127.3L200.1,133.1M200.1,133.1L204.2,141.5M204.2,141.5L213.0,135.1M204.2,141.5L208.9,151.1M208.9,151.1L215.4,144.4M208.9,151.1L209.7,160.4M209.7,160.4L212.9,170.2M212.9,170.2L220.4,164.2M212.9,170.2L212.6,180.4M212.6,180.4L213.5,189.7M150.4,-25.7L153.4,-26.2M153.5,-15.2L158.7,-20.0M153.5,-15.2L155.3,-8.8M155.3,-8.8L157.9,-0.2M157.9,-0.2L162.6,-2.1M157.8,7.1L160.4,13.3M160.4,13.3L159.1,23.0M159.1,23.0L164.8,20.2M159.1,23.0L162.4,28.0M162.4,28.0L165.3,25.8M160.6,36.8L167.0,32.7M162.3,43.7L167.5,38.3M163.0,49.7L172.1,46.4M165.3,55.7L171.6,51.5M165.3,55.7L169.3,62.6M169.3,62.6L172.6,69.8M172.6,69.8L176.8,65.0M175.2,75.8L180.5,68.4M175.2,75.8L177.5,80.6M177.5,80.6L182.0,87.1M182.0,87.1L185.7,94.0M185.7,94.0L194.8,87.5M185.7,94.0L191.1,99.9M191.1,99.9L197.6,106.9M197.6,106.9L201.9,98.0M197.6,106.9L200.4,113.5M200.4,113.5L206.4,104.5M200.4,113.5L206.8,118.5M206.8,118.5L213.2,112.7M206.8,118.5L210.2,128.2M210.2,128.2L215.4,119.9M210.2,128.2L213.0,135.1M213.0,135.1L222.2,130.0M215.4,144.4L220.5,153.7M220.5,153.7L229.2,147.4M220.5,153.7L220.4,164.2M220.4,164.2L229.9,157.4M220.4,164.2L222.4,174.3M222.4,174.3L231.4,166.0M223.2,183.7L232.6,177.9M158.7,-20.0L161.7,-22.7M158.7,-20.0L160.7,-10.9M160.7,-10.9L166.7,-14.4M160.7,-10.9L162.6,-2.1M162.6,-2.1L164.9,3.6M164.9,3.6L169.3,0.3M164.9,3.6L164.5,12.0M164.5,12.0L169.9,7.5M164.5,12.0L164.8,20.2M164.8,20.2L171.7,16.3M164.8,20.2L165.3,25.8M165.3,25.8L167.0,32.7M167.0,32.7L172.2,26.8M167.0,32.7L167.5,38.3M167.5,38.3L174.9,33.8M167.5,38.3L172.1,46.4M172.1,46.4L174.7,40.1M172.1,46.4L171.6,51.5M171.6,51.5L177.4,45.7M171.6,51.5L173.4,56.4M173.4,56.4L176.8,65.0M176.8,65.0L183.0,58.6M176.8,65.0L180.5,68.4M180.5,68.4L186.1,64.6M180.5,68.4L183.5,73.6M183.5,73.6L189.7,68.9M190.6,81.4L195.8,74.8M190.6,81.4L194.8,87.5M194.8,87.5L199.1,91.7M199.1,91.7L204.9,86.1M199.1,91.7L201.9,98.0M201.9,98.0L208.2,90.7M201.9,98.0L206.4,104.5M206.4,104.5L214.4,98.4M206.4,104.5L213.2,112.7M213.2,112.7L218.2,106.2M215.4,119.9L223.8,113.0M222.2,130.0L228.8,122.5M222.2,130.0L225.5,138.5M225.5,138.5L232.1,130.6M225.5,138.5L229.2,147.4M229.2,147.4L236.6,140.5M229.2,147.4L229.9,157.4M229.9,157.4L238.5,149.3M229.9,157.4L231.4,166.0M231.4,166.0L232.6,177.9M232.6,177.9L243.5,170.1M157.7,-31.7L162.7,-33.6M157.7,-31.7L161.7,-22.7M161.7,-22.7L165.7,-27.1M166.7,-14.4L171.1,-19.5M166.7,-14.4L168.5,-5.9M168.5,-5.9L172.1,-10.9M168.5,-5.9L169.3,0.3M169.3,0.3L172.4,-3.6M169.3,0.3L169.9,7.5M169.9,7.5L174.2,3.9M169.9,7.5L171.7,16.3M171.7,16.3L177.8,9.7M171.7,16.3L173.2,21.2M173.2,21.2L177.1,18.2M172.2,26.8L179.2,22.3M172.2,26.8L174.9,33.8M174.9,33.8L179.3,29.2M174.9,33.8L174.7,40.1M174.7,40.1L183.1,35.5M177.4,45.7L181.3,52.6M181.3,52.6L186.3,45.5M181.3,52.6L183.0,58.6M183.0,58.6L186.1,64.6M186.1,64.6L192.7,57.1M186.1,64.6L189.7,68.9M189.7,68.9L197.5,63.5M195.8,74.8L201.3,65.8M195.8,74.8L199.7,80.9M199.7,80.9L204.9,86.1M204.9,86.1L210.0,78.8M204.9,86.1L208.2,90.7M208.2,90.7L214.4,98.4M218.2,106.2L227.4,98.4M218.2,106.2L223.8,113.0M223.8,113.0L231.8,106.0M223.8,113.0L228.8,122.5M228.8,122.5L235.1,114.0M228.8,122.5L232.1,130.6M232.1,130.6L240.7,121.3M232.1,130.6L236.6,140.5M236.6,140.5L245.0,131.4M236.6,140.5L238.5,149.3M238.5,149.3L247.5,142.6M238.5,149.3L241.3,160.8M241.3,160.8L250.9,154.0M241.3,160.8L243.5,170.1M243.5,170.1L252.2,165.5M162.7,-33.6L166.6,-37.3M165.7,-27.1L172.5,-30.1M165.7,-27.1L171.1,-19.5M171.1,-19.5L174.8,-20.3M172.1,-10.9L175.4,-13.3M172.1,-10.9L172.4,-3.6M172.4,-3.6L179.2,-6.8M172.4,-3.6L174.2,3.9M174.2,3.9L181.2,1.2M174.2,3.9L177.8,9.7M177.8,9.7L180.4,6.6M177.1,18.2L183.2,13.6M177.1,18.2L179.2,22.3M179.3,29.2L183.1,35.5M183.1,35.5L187.0,31.6M183.1,35.5L183.1,41.2M183.1,41.2L190.7,36.4M186.3,45.5L191.3,41.5M189.9,52.5L194.8,46.1M189.9,52.5L192.7,57.1M192.7,57.1L197.5,63.5M197.5,63.5L202.7,56.7M197.5,63.5L201.3,65.8M201.3,65.8L206.4,60.2M201.3,65.8L205.6,73.1M210.0,78.8L214.7,72.2M210.0,78.8L215.2,84.6M215.2,84.6L220.8,76.5M215.2,84.6L221.2,91.2M221.2,91.2L225.4,81.8M221.2,91.2L227.4,98.4M227.4,98.4L233.6,89.0M227.4,98.4L231.8,106.0M231.8,106.0L237.0,98.3M231.8,106.0L235.1,114.0M235.1,114.0L240.7,121.3M240.7,121.3L245.0,131.4M245.0,131.4L251.7,123.8M245.0,131.4L247.5,142.6M247.5,142.6L250.9,154.0M250.9,154.0L252.2,165.5M252.2,165.5L260.1,155.9M166.6,-37.3L172.5,-30.1M172.5,-30.1L174.6,-34.4M172.5,-30.1L174.8,-20.3M174.8,-20.3L177.9,-25.5M174.8,-20.3L175.4,-13.3M175.4,-13.3L181.2,-19.7M179.2,-6.8L183.5,-12.0M180.4,6.6L185.3,1.8M180.4,6.6L183.2,13.6M183.2,13.6L188.8,8.2M183.2,13.6L185.5,20.0M185.5,20.0L190.4,13.3M185.5,20.0L186.5,23.4M186.5,23.4L192.1,17.9M186.5,23.4L187.0,31.6M187.0,31.6L193.7,24.4M187.0,31.6L190.7,36.4M190.7,36.4L192.9,28.8M190.7,36.4L191.3,41.5M191.3,41.5L198.6,35.1M194.8,46.1L200.7,40.0M198.6,51.6L201.8,43.0M198.6,51.6L202.7,56.7M202.7,56.7L207.1,49.5M202.7,56.7L206.4,60.2M206.4,60.2L212.9,51.8M211.6,65.5L217.9,57.9M211.6,65.5L214.7,72.2M214.7,72.2L220.8,61.6M220.8,76.5L226.6,68.7M220.8,76.5L225.4,81.8M225.4,81.8L233.6,89.0M237.0,98.3L243.1,90.0M237.0,98.3L241.9,106.2M241.9,106.2L248.4,97.2M247.7,115.9L253.0,105.6M251.7,123.8L260.6,116.6M251.7,123.8L254.8,134.2M254.8,134.2L263.2,127.1M254.8,134.2L257.1,144.2M257.1,144.2L267.3,137.5M257.1,144.2L260.1,155.9M260.1,155.9L269.3,147.6M171.6,-40.1L173.4,-47.0M171.6,-40.1L174.6,-34.4M174.6,-34.4L179.1,-39.5M174.6,-34.4L177.9,-25.5M177.9,-25.5L183.6,-30.7M177.9,-25.5L181.2,-19.7M181.2,-19.7L185.1,-23.5M181.2,-19.7L183.5,-12.0M183.5,-12.0L188.2,-16.8M183.5,-12.0L184.0,-3.6M184.0,-3.6L191.2,-9.2M184.0,-3.6L185.3,1.8M185.3,1.8L190.2,-4.2M185.3,1.8L188.8,8.2M188.8,8.2L194.2,3.3M188.8,8.2L190.4,13.3M190.4,13.3L193.7,9.3M190.4,13.3L192.1,17.9M192.1,17.9L194.4,15.1M192.1,17.9L193.7,24.4M193.7,24.4L198.9,19.3M193.7,24.4L192.9,28.8M192.9,28.8L198.2,23.2M198.6,35.1L200.7,40.0M201.8,43.0L206.9,36.7M207.1,49.5L211.2,40.8M212.9,51.8L217.8,46.7M220.8,61.6L226.6,68.7M226.6,68.7L233.2,60.6M226.6,68.7L232.3,74.2M232.3,74.2L239.0,66.0M232.3,74.2L239.6,81.5M243.1,90.0L248.4,97.2M248.4,97.2L256.7,89.8M248.4,97.2L253.0,105.6M253.0,105.6L259.4,97.5M260.6,116.6L266.3,109.3M260.6,116.6L263.2,127.1M263.2,127.1L271.0,116.9M263.2,127.1L267.3,137.5M267.3,137.5L273.9,128.9M267.3,137.5L269.3,147.6M269.3,147.6L276.7,140.0M173.4,-47.0L179.2,-50.6M173.4,-47.0L179.1,-39.5M179.1,-39.5L183.1,-42.6M179.1,-39.5L183.6,-30.7M183.6,-30.7L189.2,-34.4M183.6,-30.7L185.1,-23.5M185.1,-23.5L191.6,-26.0M185.1,-23.5L188.2,-16.8M188.2,-16.8L191.7,-19.3M188.2,-16.8L191.2,-9.2M191.2,-9.2L193.8,-15.0M191.2,-9.2L190.2,-4.2M190.2,-4.2L197.5,-7.1M190.2,-4.2L194.2,3.3M193.7,9.3L200.2,2.9M193.7,9.3L194.4,15.1M194.4,15.1L200.0,7.2M194.4,15.1L198.9,19.3M198.9,19.3L201.4,11.3M198.9,19.3L198.2,23.2M198.2,23.2L206.1,18.7M198.2,23.2L203.1,28.3M203.1,28.3L206.5,21.2M203.1,28.3L204.0,31.5M204.0,31.5L209.1,26.5M204.0,31.5L206.9,36.7M206.9,36.7L213.1,28.6M206.9,36.7L211.2,40.8M211.2,40.8L218.2,35.1M211.2,40.8L217.8,46.7M217.8,46.7L219.9,37.9M217.8,46.7L221.3,51.0M221.3,51.0L225.2,42.9M221.3,51.0L225.4,56.6M225.4,56.6L230.9,46.7M225.4,56.6L233.2,60.6M233.2,60.6L236.4,53.0M233.2,60.6L239.0,66.0M239.0,66.0L242.9,58.6M245.2,72.8L249.5,65.1M250.9,82.0L256.5,72.4M250.9,82.0L256.7,89.8M256.7,89.8L262.0,82.2M259.4,97.5L267.2,90.2M259.4,97.5L266.3,109.3M266.3,109.3L273.2,100.4M266.3,109.3L271.0,116.9M271.0,116.9L276.3,110.0M271.0,116.9L273.9,128.9M273.9,128.9L280.5,119.9M273.9,128.9L276.7,140.0M276.7,140.0L286.0,132.5M179.2,-50.6L182.9,-56.2M179.2,-50.6L183.1,-42.6M183.1,-42.6L189.2,-34.4M189.2,-34.4L192.2,-39.5M191.6,-26.0L196.4,-30.8M191.6,-26.0L191.7,-19.3M191.7,-19.3L193.8,-15.0M193.8,-15.0L201.9,-19.9M197.5,-7.1L202.2,-12.5M197.5,-7.1L198.5,-2.3M198.5,-2.3L202.7,-6.2M198.5,-2.3L200.2,2.9M200.2,2.9L205.0,-1.7M200.2,2.9L200.0,7.2M200.0,7.2L201.4,11.3M201.4,11.3L207.1,7.2M206.1,18.7L210.4,10.4M206.5,21.2L211.2,14.5M206.5,21.2L209.1,26.5M209.1,26.5L216.3,19.4M209.1,26.5L213.1,28.6M213.1,28.6L217.9,22.9M213.1,28.6L218.2,35.1M218.2,35.1L222.2,25.8M218.2,35.1L219.9,37.9M219.9,37.9L224.7,29.3M219.9,37.9L225.2,42.9M225.2,42.9L230.9,46.7M230.9,46.7L236.4,53.0M236.4,53.0L242.9,46.3M236.4,53.0L242.9,58.6M242.9,58.6L249.5,65.1M249.5,65.1L253.9,56.8M256.5,72.4L261.2,64.8M256.5,72.4L262.0,82.2M262.0,82.2L265.4,74.2M267.2,90.2L272.8,82.6M267.2,90.2L273.2,100.4M273.2,100.4L278.6,92.0M276.3,110.0L280.5,119.9M280.5,119.9L287.4,114.4M280.5,119.9L286.0,132.5M286.0,132.5L292.3,124.2M182.9,-56.2L189.6,-58.4M182.9,-56.2L187.1,-46.3M187.1,-46.3L194.5,-51.7M192.2,-39.5L196.6,-43.0M192.2,-39.5L196.4,-30.8M196.4,-30.8L200.2,-36.2M196.4,-30.8L198.9,-26.2M198.9,-26.2L204.3,-30.8M198.9,-26.2L201.9,-19.9M201.9,-19.9L204.1,-23.5M201.9,-19.9L202.2,-12.5M202.2,-12.5L202.7,-6.2M202.7,-6.2L210.3,-13.6M202.7,-6.2L205.0,-1.7M205.0,-1.7L210.8,-8.0M205.0,-1.7L205.0,3.5M205.0,3.5L211.7,-3.9M205.0,3.5L207.1,7.2M207.1,7.2L212.1,1.0M207.1,7.2L210.4,10.4M210.4,10.4L215.2,6.1M210.4,10.4L211.2,14.5M211.2,14.5L217.3,8.6M211.2,14.5L216.3,19.4M216.3,19.4L220.1,12.6M216.3,19.4L217.9,22.9M217.9,22.9L222.5,15.0M222.2,25.8L224.7,29.3M224.7,29.3L231.1,35.2M231.1,35.2L235.0,28.0M231.1,35.2L237.6,40.0M237.6,40.0L241.3,31.9M242.9,46.3L247.5,36.5M242.9,46.3L247.8,50.3M247.8,50.3L253.9,56.8M253.9,56.8L259.6,49.1M261.2,64.8L266.8,55.1M261.2,64.8L265.4,74.2M265.4,74.2L272.2,66.0M265.4,74.2L272.8,82.6M272.8,82.6L279.6,73.0M272.8,82.6L278.6,92.0M284.0,101.1L287.4,114.4M287.4,114.4L295.7,106.6M287.4,114.4L292.3,124.2M292.3,124.2L301.3,117.4M189.6,-58.4L193.6,-64.9M189.6,-58.4L194.5,-51.7M194.5,-51.7L199.8,-57.2M194.5,-51.7L196.6,-43.0M196.6,-43.0L204.5,-49.5M196.6,-43.0L200.2,-36.2M200.2,-36.2L205.8,-39.9M200.2,-36.2L204.3,-30.8M204.3,-30.8L209.4,-33.9M208.3,-17.8L212.7,-21.5M208.3,-17.8L210.3,-13.6M210.3,-13.6L213.5,-16.6M210.3,-13.6L210.8,-8.0M210.8,-8.0L216.9,-12.6M210.8,-8.0L211.7,-3.9M211.7,-3.9L216.2,-8.2M211.7,-3.9L212.1,1.0M212.1,1.0L219.7,-4.6M212.1,1.0L215.2,6.1M215.2,6.1L219.2,-0.9M215.2,6.1L217.3,8.6M217.3,8.6L223.7,2.6M220.1,12.6L223.6,4.7M220.1,12.6L222.5,15.0M222.5,15.0L227.1,19.1M227.1,19.1L229.8,12.1M227.1,19.1L229.2,22.2M229.2,22.2L234.7,16.2M229.2,22.2L235.0,28.0M235.0,28.0L238.9,20.4M241.3,31.9L247.5,36.5M247.5,36.5L252.2,43.6M252.2,43.6L258.4,35.6M259.6,49.1L264.4,42.0M259.6,49.1L266.8,55.1M266.8,55.1L272.2,66.0M272.2,66.0L279.6,73.0M279.6,73.0L285.4,84.1M285.4,84.1L291.5,94.2M291.5,94.2L297.4,88.1M291.5,94.2L295.7,106.6M295.7,106.6L301.3,97.8M295.7,106.6L301.3,117.4M301.3,117.4L307.3,111.7M193.6,-64.9L199.8,-68.8M193.6,-64.9L199.8,-57.2M199.8,-57.2L204.8,-58.8M199.8,-57.2L204.5,-49.5M204.5,-49.5L209.4,-53.7M205.8,-39.9L214.4,-44.2M205.8,-39.9L209.4,-33.9M209.4,-33.9L214.5,-40.2M211.0,-29.4L218.3,-33.6M211.0,-29.4L212.7,-21.5M212.7,-21.5L219.1,-27.2M212.7,-21.5L213.5,-16.6M213.5,-16.6L219.8,-22.6M213.5,-16.6L216.9,-12.6M216.9,-12.6L220.7,-19.3M216.9,-12.6L216.2,-8.2M216.2,-8.2L223.0,-14.5M216.2,-8.2L219.7,-4.6M219.7,-4.6L225.4,-11.7M219.2,-0.9L223.7,2.6M223.7,2.6L227.2,-5.0M223.6,4.7L228.2,7.6M228.2,7.6L232.5,3.7M229.8,12.1L237.9,6.5M229.8,12.1L234.7,16.2M234.7,16.2L238.9,20.4M238.9,20.4L244.1,12.5M238.9,20.4L246.1,24.1M246.1,24.1L249.9,16.6M246.1,24.1L251.6,29.7M251.6,29.7L256.8,22.6M251.6,29.7L258.4,35.6M258.4,35.6L261.8,27.4M264.4,42.0L267.9,33.4M264.4,42.0L271.7,47.8M271.7,47.8L275.6,40.6M271.7,47.8L276.1,58.5M276.1,58.5L282.8,49.5M276.1,58.5L285.0,65.0M285.0,65.0L290.4,58.8M285.0,65.0L291.6,77.0M291.6,77.0L297.3,71.2M291.6,77.0L297.4,88.1M297.4,88.1L303.7,79.8M297.4,88.1L301.3,97.8M301.3,97.8L309.3,92.3M301.3,97.8L307.3,111.7M307.3,111.7L314.3,104.5M199.8,-68.8L204.8,-58.8M204.8,-58.8L212.6,-64.8M204.8,-58.8L209.4,-53.7M209.4,-53.7L214.4,-44.2M214.4,-44.2L214.5,-40.2M214.5,-40.2L221.4,-43.8M214.5,-40.2L218.3,-33.6M218.3,-33.6L219.1,-27.2M219.1,-27.2L224.1,-32.4M219.1,-27.2L219.8,-22.6M219.8,-22.6L228.2,-26.1M219.8,-22.6L220.7,-19.3M220.7,-19.3L228.6,-22.7M220.7,-19.3L223.0,-14.5M223.0,-14.5L229.4,-17.8M223.0,-14.5L225.4,-11.7M227.1,-7.8L231.7,-11.2M227.2,-5.0L233.6,-9.2M227.2,-5.0L229.5,1.0M229.5,1.0L235.1,-6.0M229.5,1.0L232.5,3.7M232.5,3.7L238.4,-2.1M232.5,3.7L237.9,6.5M237.9,6.5L243.4,1.2M237.9,6.5L239.5,9.2M239.5,9.2L244.1,12.5M244.1,12.5L249.0,6.3M249.9,16.6L256.6,11.2M249.9,16.6L256.8,22.6M256.8,22.6L260.5,14.6M256.8,22.6L261.8,27.4M261.8,27.4L266.8,20.3M267.9,33.4L273.1,28.8M267.9,33.4L275.6,40.6M275.6,40.6L280.2,34.3M275.6,40.6L282.8,49.5M282.8,49.5L290.4,58.8M290.4,58.8L297.3,71.2M297.3,71.2L303.2,64.2M303.7,79.8L309.3,92.3M309.3,92.3L314.0,86.0M309.3,92.3L314.3,104.5M314.3,104.5L319.2,100.1M206.5,-73.0L213.4,-75.3M206.5,-73.0L212.6,-64.8M212.6,-64.8L219.4,-69.6M217.4,-56.3L222.4,-60.5M219.3,-51.4L227.7,-54.7M221.4,-43.8L228.6,-47.8M221.4,-43.8L223.8,-37.4M223.8,-37.4L231.2,-41.9M223.8,-37.4L224.1,-32.4M224.1,-32.4L234.2,-36.2M224.1,-32.4L228.2,-26.1M228.2,-26.1L233.2,-32.4M228.2,-26.1L228.6,-22.7M228.6,-22.7L234.9,-28.9M228.6,-22.7L229.4,-17.8M229.4,-17.8L231.2,-16.0M231.2,-16.0L237.3,-19.6M231.7,-11.2L233.6,-9.2M233.6,-9.2L239.3,-14.7M233.6,-9.2L235.1,-6.0M235.1,-6.0L241.9,-13.1M235.1,-6.0L238.4,-2.1M238.4,-2.1L244.4,-9.2M238.4,-2.1L243.4,1.2M243.4,1.2L246.5,-6.4M243.4,1.2L247.2,1.6M247.2,1.6L252.4,-2.5M247.2,1.6L249.0,6.3M249.0,6.3L255.3,-0.1M249.0,6.3L256.6,11.2M256.6,11.2L261.4,5.1M256.6,11.2L260.5,14.6M260.5,14.6L266.1,9.7M266.8,20.3L272.7,15.8M273.1,28.8L280.9,21.5M273.1,28.8L280.2,34.3M280.2,34.3L286.8,29.6M280.2,34.3L288.6,42.6M288.6,42.6L294.4,37.0M296.3,53.6L303.2,64.2M303.2,64.2L306.8,58.4M303.2,64.2L309.1,73.8M309.1,73.8L313.7,69.1M309.1,73.8L314.0,86.0M314.0,86.0L319.2,100.1M319.2,100.1L325.0,95.2M213.4,-75.3L219.4,-69.6M219.4,-69.6L222.4,-60.5M227.7,-54.7L228.6,-47.8M231.2,-41.9L234.2,-36.2M234.2,-36.2L233.2,-32.4M233.2,-32.4L234.9,-28.9M234.9,-28.9L235.4,-25.5M235.4,-25.5L237.3,-19.6M237.3,-19.6L239.3,-17.4M239.3,-17.4L239.3,-14.7M239.3,-14.7L241.9,-13.1M241.9,-13.1L244.4,-9.2M244.4,-9.2L246.5,-6.4M246.5,-6.4L252.4,-2.5M252.4,-2.5L255.3,-0.1M255.3,-0.1L261.4,5.1M261.4,5.1L266.1,9.7M266.1,9.7L272.7,15.8M280.9,21.5L286.8,29.6M286.8,29.6L294.4,37.0M306.8,58.4L313.7,69.1M320.4,80.3L325.0,95.2" fill="none" stroke="#fff" stroke-width="1.5"/><rect x="97.6" y="23.6" width="15.8" height="14.2" fill="#d2e1ae"/><rect x="129" y="0" width="25" height="11" fill="#d2e1ae"/><rect x="171.6" y="36" width="14.2" height="17.5" fill="#d2e1ae"/><rect x="154" y="72" width="19" height="16" fill="#d2e1ae"/><rect x="74" y="50" width="11" height="10" fill="#d2e1ae"/><rect x="192" y="116.5" width="22" height="12.5" fill="#d2e1ae"/><rect x="0" y="176" width="19" height="18" fill="#d2e1ae"/><rect x="45" y="161" width="6" height="6" fill="#d2e1ae"/><rect x="60" y="180" width="25" height="14" fill="#d2e1ae"/><rect x="18" y="14" width="6" height="5" fill="#d2e1ae"/><rect x="72" y="0" width="7" height="7" fill="#d2e1ae"/><rect x="110" y="40" width="7" height="12" fill="#d2e1ae"/><rect x="120" y="52" width="8" height="6" fill="#d2e1ae"/><path d="M267,134.8 C240,134.5 200,136 176,143.3 C160,148 140,165 133,181 L130.7,194 L150.5,194 C152,185 156,172 166,165 C180,155 205,150 267,150.5 Z" fill="#a8d2e9"/><path d="M0,85 L40,80 L80,78 L130,72 L190,62 L267,58" fill="none" stroke="#fff" stroke-width="3.2" stroke-linejoin="round"/><path d="M0,12 L60,28 L100,50 L130,72 L150,100 L160,115 L176,143" fill="none" stroke="#fff" stroke-width="3.2" stroke-linejoin="round"/><path d="M88,0 L95,30 L100,50" fill="none" stroke="#fff" stroke-width="3.2" stroke-linejoin="round"/><path d="M0,150 L40,140 L90,118 L150,100" fill="none" stroke="#fff" stroke-width="3.2" stroke-linejoin="round"/><path d="M0,165 L50,165 L95,150 L140,130 L190,112 L267,108" fill="none" stroke="#fff" stroke-width="3.2" stroke-linejoin="round"/><path d="M239,0 L240,60 L240,194" fill="none" stroke="#fff" stroke-width="3.2" stroke-linejoin="round"/><path d="M148,0 L152,30 L150,70 L158,104 L176,143 L190,194" fill="none" stroke="#fff" stroke-width="3.2" stroke-linejoin="round"/><path d="M0,40 L40,50 L80,78 L95,120 L90,165 L95,194" fill="none" stroke="#fff" stroke-width="3.2" stroke-linejoin="round"/><path d="M190,62 L210,40 L230,20 L267,5" fill="none" stroke="#fff" stroke-width="3.2" stroke-linejoin="round"/><path d="M200,0 L205,30 L210,40 L220,75 L235,108" fill="none" stroke="#fff" stroke-width="3.2" stroke-linejoin="round"/><path d="M30,0 L35,40 L40,80 L45,130 L40,170 L20,194" fill="none" stroke="#fff" stroke-width="3.2" stroke-linejoin="round"/><path d="M120,194 L130,160 L140,130" fill="none" stroke="#fff" stroke-width="3.2" stroke-linejoin="round"/><path d="M267,132 C240,131 200,133 174,140 C158,145 138,162 130,180 L127,194" fill="none" stroke="#fff" stroke-width="3.2" stroke-linejoin="round"/><path d="M267,153 C205,153 182,157 168,168 C158,176 154,185 153,194" fill="none" stroke="#fff" stroke-width="3.2" stroke-linejoin="round"/><path d="M176,143 L176,110 L190,62" fill="none" stroke="#fff" stroke-width="3.2" stroke-linejoin="round"/><circle cx="95" cy="165" r="4" fill="none" stroke="#fff" stroke-width="2"/><circle cx="179" cy="183" r="4" fill="none" stroke="#fff" stroke-width="2"/><path d="M133.8,102.5 L125.5,93 A10.5,10.5 0 1 1 142.1,93 Z" fill="#ef5350"/><circle cx="133.8" cy="87.7" r="10.4" fill="#ef5350"/><circle cx="133.8" cy="87.7" r="4.1" fill="#b42c29"/></g></svg>
<div class="card" style="left:6px;top:296px;width:1068px;height:191px"></div>
<div class="a" style="left:15px;top:296px;width:60px;height:30px;background:#eaf3f1"></div>
<div class="a" style="left:6px;top:325px;width:1068px;height:1px;background:#eceeef"></div>
<div class="a" style="left:15px;top:324px;width:60px;height:2.5px;background:#3a9a87"></div>
<svg class="a" style="left:21px;top:306px" width="10" height="10" viewBox="0 0 10 10"><rect x="0.95" y="1.35" width="7.1" height="7.2" rx="0.9" fill="none" stroke="#3b8c79" stroke-width="0.85"/><path d="M0.95,3.1 H8.05 M3.9,3.1 V8.55" fill="none" stroke="#3b8c79" stroke-width="0.85"/></svg>
<div class="a" style="left:33px;top:305px;font-size:9.5px;color:#2f7f6d;-webkit-text-stroke:0.1px #2f7f6d">Rent roll</div>
<div class="a" style="left:81px;top:305px;font-size:9.5px;color:#6b7280">Sources (4)</div>
<div class="a" style="left:144px;top:305px;font-size:9.5px;color:#6b7280">Notes (1)</div>
<div class="a" style="left:21px;top:345.5px;font-size:13.2px;color:#1f4356;-webkit-text-stroke:0.15px #1f4356">Rent Roll</div>
<div class="a" style="left:80px;top:347px;font-size:9.7px;color:#4b5563">(As of May-24 from IM)</div>
<div class="a" style="left:758px;top:340.5px;width:131px;height:24px;background:#e8eced;border-radius:3px"></div>
<div class="a" style="left:760.7px;top:343.5px;width:62.5px;height:18px;background:#fff;border-radius:3px"></div>
<div class="a" style="left:779px;top:347px;font-size:9.5px;color:#374151">Yearly</div>
<div class="a" style="left:837px;top:347px;font-size:10px;color:#6b7280">Monthly</div>
<div class="a" style="left:895px;top:340.5px;width:71px;height:24px;background:#e8eced;border-radius:3px"></div>
<div class="a" style="left:898px;top:343.5px;width:32px;height:18px;background:#fff;border-radius:3px"></div>
<div class="a" style="left:905px;top:346.8px;font-size:9.8px;color:#374151">sqm</div>
<div class="a" style="left:940px;top:346.8px;font-size:10px;color:#6b7280">sqf</div>
<div class="a" style="left:972px;top:340px;width:57px;height:24.5px;background:#fff;border:1px solid #e6e8eb;border-radius:3px"></div>
<div class="a" style="left:978.5px;top:345.5px;font-size:10.5px;color:#2a323d;transform:scaleX(0.9);transform-origin:0 0">EUR</div>
<svg class="a" style="left:0;top:0" width="1080" height="616"><path d="M1013.6,350.6 L1017,354 L1020.4,350.6" fill="none" stroke="#7d8591" stroke-width="1.15"/><rect x="1035" y="340.5" width="24" height="24" rx="3" fill="#3a9a87"/><path d="M1047,348 V354.5 M1044.3,351.8 L1047,354.5 L1049.7,351.8 M1042.2,353.5 V356.8 H1051.8 V353.5" fill="none" stroke="#fff" stroke-width="1.2" stroke-linecap="round" stroke-linejoin="round"/></svg>
<div class="a" style="left:21px;top:373px;width:1038px;height:99px;border:1px solid #e5e7eb;border-radius:4px;overflow:hidden"><div class="a" style="left:0;top:0;width:1038px;height:24px;background:#f7f8fa"></div><div class="a" style="left:0;top:74px;width:1038px;height:25px;background:#ebf3f2"></div></div>
<div class="a" style="left:21px;top:397px;width:1038px;height:1px;background:#e5e7eb"></div>
<div class="a" style="left:21px;top:422px;width:1038px;height:1px;background:#e5e7eb"></div>
<div class="a" style="left:21px;top:447px;width:1038px;height:1px;background:#e5e7eb"></div>
<div class="a" style="left:194.0px;top:373px;width:1px;height:99px;background:#e5e7eb"></div>
<div class="a" style="left:290.0px;top:373px;width:1px;height:99px;background:#e5e7eb"></div>
<div class="a" style="left:386.0px;top:373px;width:1px;height:99px;background:#e5e7eb"></div>
<div class="a" style="left:482.0px;top:373px;width:1px;height:99px;background:#e5e7eb"></div>
<div class="a" style="left:578.0px;top:373px;width:1px;height:99px;background:#e5e7eb"></div>
<div class="a" style="left:674.0px;top:373px;width:1px;height:99px;background:#e5e7eb"></div>
<div class="a" style="left:770.0px;top:373px;width:1px;height:99px;background:#e5e7eb"></div>
<div class="a" style="left:866.0px;top:373px;width:1px;height:99px;background:#e5e7eb"></div>
<div class="a" style="left:962.0px;top:373px;width:1px;height:99px;background:#e5e7eb"></div>
<div class="th" style="left:27.5px;top:381px">Tenant</div>
<div class="th" style="left:200.5px;top:381px">Area (sqm)</div>
<div class="th" style="left:296.5px;top:381px">Occupancy</div>
<div class="th" style="left:392.5px;top:381px">Start Date</div>
<div class="th" style="left:488.5px;top:381px">First Break</div>
<div class="th" style="left:584.5px;top:381px">Second Break</div>
<div class="th" style="left:680.5px;top:381px">End Date</div>
<div class="th" style="left:776.5px;top:381px">WALB</div>
<div class="th" style="left:872.5px;top:381px">Rent (EUR)</div>
<div class="th" style="left:968.5px;top:381px">EUR/sqm</div>
<div class="td" style="left:27.5px;top:403.5px;font-size:11px">Tenant ABC</div>
<div class="td" style="right:795.3px;top:403.7px">49,231</div>
<div class="td" style="right:699.3px;top:403.7px">100%</div>
<div class="td" style="right:603.3px;top:403.7px">Sep-16</div>
<div class="td" style="right:507.29999999999995px;top:403.7px">-</div>
<div class="td" style="right:411.29999999999995px;top:403.7px">-</div>
<div class="td" style="right:315.29999999999995px;top:403.7px">Dec-27</div>
<div class="td" style="right:219.29999999999995px;top:403.7px">4.32</div>
<div class="td" style="right:123.29999999999995px;top:403.7px">3,080,760</div>
<div class="td" style="right:27.299999999999955px;top:403.7px">62.6</div>
<div class="td" style="left:27.5px;top:428.5px;font-size:11px">Tenant DEF</div>
<div class="td" style="right:795.3px;top:428.7px">49,231</div>
<div class="td" style="right:699.3px;top:428.7px">100%</div>
<div class="td" style="right:603.3px;top:428.7px">Sep-16</div>
<div class="td" style="right:507.29999999999995px;top:428.7px">-</div>
<div class="td" style="right:411.29999999999995px;top:428.7px">-</div>
<div class="td" style="right:315.29999999999995px;top:428.7px">Dec-27</div>
<div class="td" style="right:219.29999999999995px;top:428.7px">4.32</div>
<div class="td" style="right:123.29999999999995px;top:428.7px">3,080,760</div>
<div class="td" style="right:27.299999999999955px;top:428.7px">62.6</div>
<div class="tg" style="left:27.5px;top:453.5px;font-size:11px">Total/Average</div>
<div class="tg" style="right:795.3px;top:453.7px">49,231</div>
<div class="tg" style="right:699.3px;top:453.7px">100%</div>
<div class="tg" style="right:219.29999999999995px;top:453.7px">4.32</div>
<div class="tg" style="right:123.29999999999995px;top:453.7px">3,080,760</div>
<div class="tg" style="right:27.299999999999955px;top:453.7px">62.6</div>
</body></html>
